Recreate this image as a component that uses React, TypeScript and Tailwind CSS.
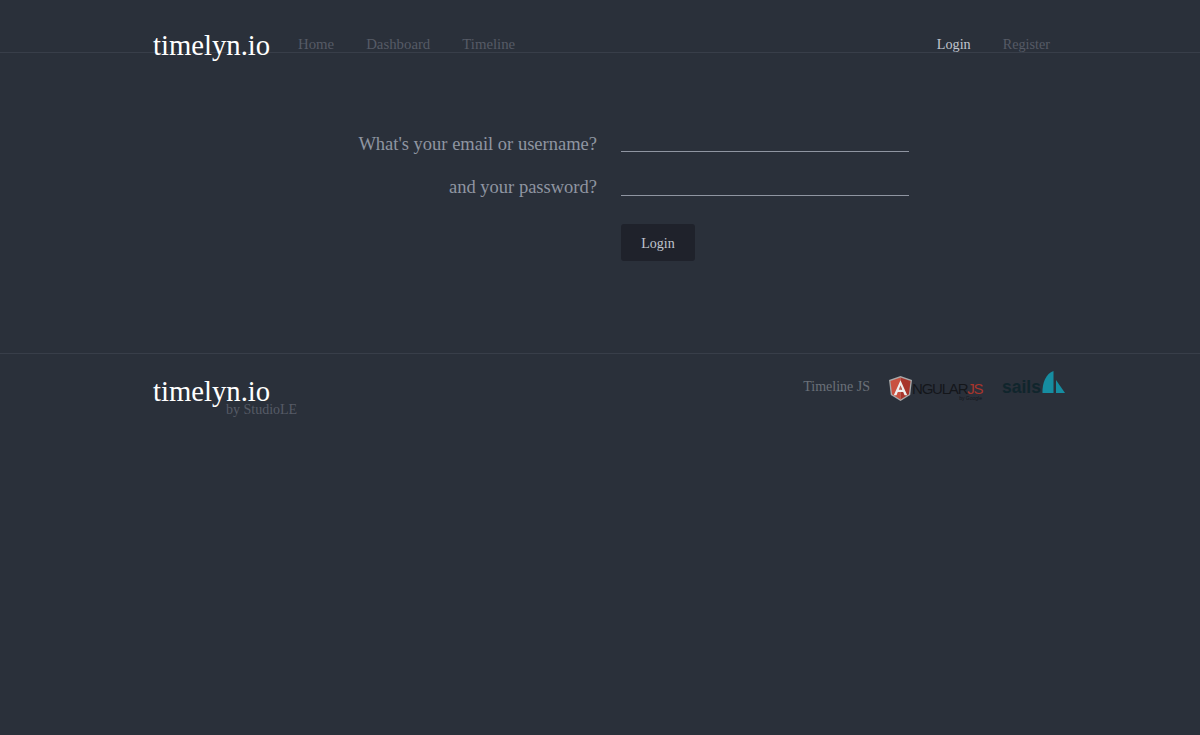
import React from "react";

const serif = "font-['Liberation_Serif','DejaVu_Serif',serif]";

function AngularLogo() {
  return (
    <div className="relative flex items-start w-[94px]">
      <svg width="23" height="25" viewBox="0 0 24 26" className="shrink-0">
        <path d="M12 0 L0 4.2 L1.9 19.8 L12 26 L22.1 19.8 L24 4.2 Z" fill="#a9a9a9" />
        <path d="M12 1.4 L22.5 5.1 L20.8 19 L12 24.5 Z" fill="#a8352c" />
        <path d="M12 1.4 L1.5 5.1 L3.2 19 L12 24.5 Z" fill="#c9503f" />
        <path d="M12 4.5 L5 20 H7.8 L9.2 16.6 H14.8 L16.2 20 H19 Z M12 9.5 L13.8 14.2 H10.2 Z" fill="#eeeeee" fillRule="evenodd" />
      </svg>
      <span className="font-['Liberation_Sans',sans-serif] text-[15px] leading-none tracking-[-1.2px] text-[#14161a] mt-[5px] whitespace-nowrap">
        NGULAR<span className="text-[#a8352c]">JS</span>
      </span>
      <span className="absolute right-[1px] top-[20px] font-['Liberation_Sans',sans-serif] text-[5px] leading-none text-[#14161a] whitespace-nowrap">by Google</span>
    </div>
  );
}

function SailsLogo() {
  return (
    <div className="flex items-end w-[63px]">
      <span className="font-['Liberation_Sans',sans-serif] font-bold text-[17.5px] leading-none text-[#10252c] mb-[-2px]">sails</span>
      <svg width="23" height="23" viewBox="0 0 23 23" className="ml-auto">
        <path d="M11.5 0 C4 2.5 0 12 0.5 22 H11.5 Z" fill="#168da1" />
        <path d="M14 9 L23 22 H14 Z" fill="#168da1" />
      </svg>
    </div>
  );
}

export default function App() {
  return (
    <div className={`min-h-[735px] bg-[#2a303a] ${serif}`}>
      <header className="h-[53px] border-b border-[#383e49] pl-[153px] pr-[150px] flex items-start justify-between">
        <nav className="flex items-start">
          <a className="text-[28.7px] leading-[32px] mt-[29px] text-white w-[145px]">timelyn.io</a>
          <div className="flex gap-[32px] mt-[36px] text-[14.8px] leading-[16px] text-[#565b66]">
            <a>Home</a>
            <a>Dashboard</a>
            <a>Timeline</a>
          </div>
        </nav>
        <div className="flex gap-[32px] mt-[36px] text-[14.2px] leading-[16px] text-[#565b66]">
          <a className="text-[#c0c5ce]">Login</a>
          <a>Register</a>
        </div>
      </header>

      <main className="h-[301px] border-b border-[#383e49] pt-[78px]">
        <form className="flex flex-col">
          <div className="flex items-start h-[44px]">
            <label className="w-[597px] text-right text-[18.5px] leading-[27px] text-[#8f95a1]">What's your email or username?</label>
            <div className="ml-[24px] w-[288px] h-[21px] border-b border-[#8f95a1]" />
          </div>
          <div className="flex items-start h-[44px]">
            <label className="w-[597px] text-right text-[18.5px] leading-[25px] text-[#8f95a1]">and your password?</label>
            <div className="ml-[24px] w-[288px] h-[21px] border-b border-[#8f95a1]" />
          </div>
          <div className="pl-[621px] mt-[5px]">
            <button type="button" className="w-[74px] h-[37px] rounded-[3px] bg-[#1f222b] pt-px text-[14px] text-[#c0c5ce]">Login</button>
          </div>
        </form>
      </main>

      <footer className="pl-[153px] pr-[135px] flex items-start justify-between">
        <div className="relative mt-[21px]">
          <a className="block text-[28.7px] leading-[32px] text-white">timelyn.io</a>
          <span className="absolute left-[73px] top-[27px] text-[14px] leading-[16px] text-[#565b66] whitespace-nowrap">by StudioLE</span>
        </div>
        <div className="flex items-start mt-[17px]">
          <a className="text-[14px] leading-[16px] text-[#6b7079] mt-[8px] mr-[19px]">Timeline JS</a>
          <div className="mt-[5px] mr-[19px]"><AngularLogo /></div>
          <SailsLogo />
        </div>
      </footer>
    </div>
  );
}
